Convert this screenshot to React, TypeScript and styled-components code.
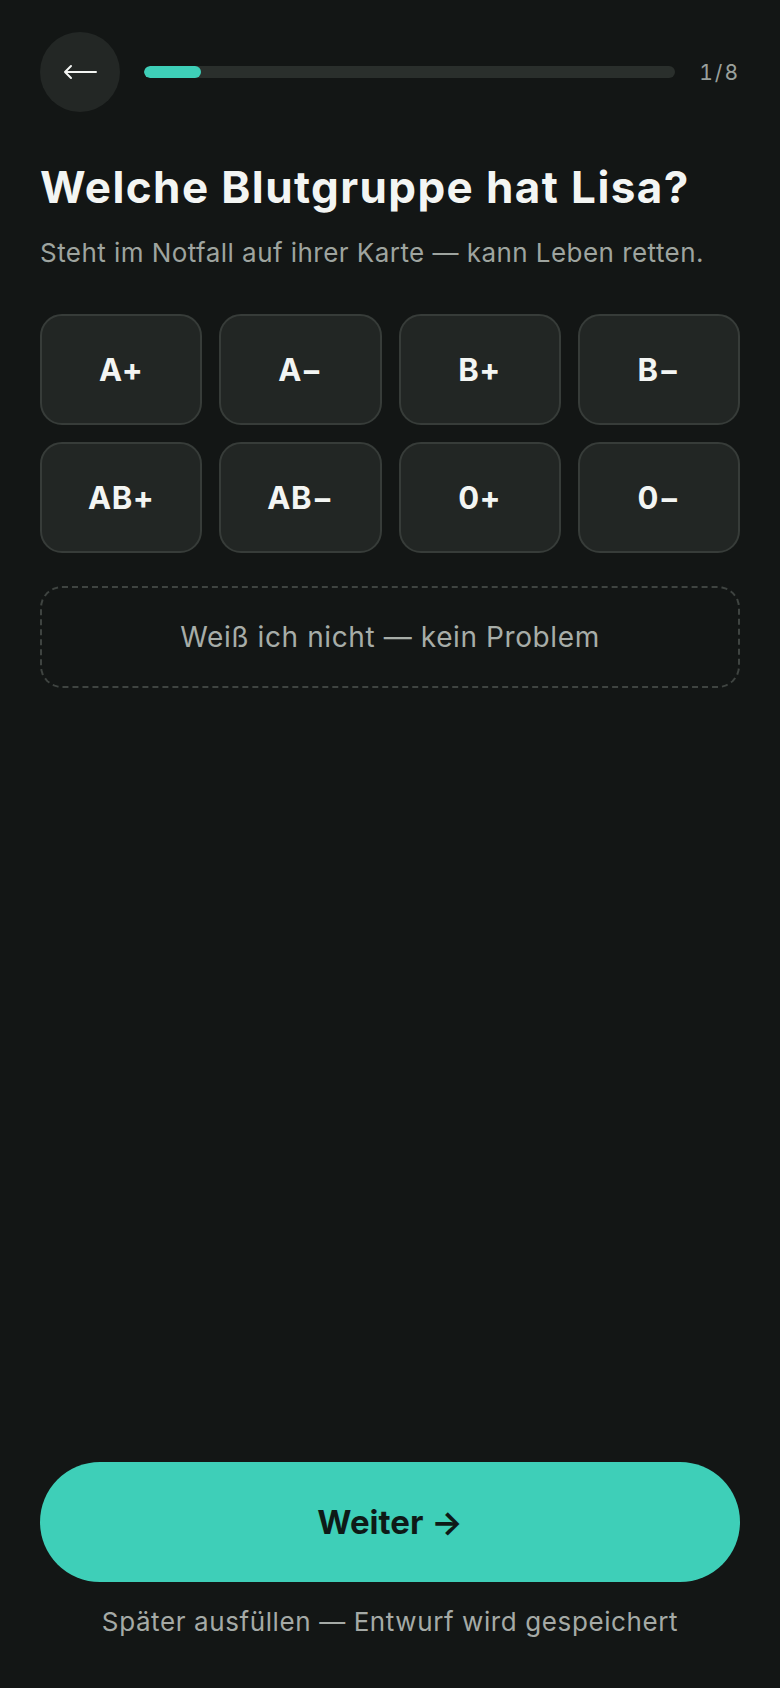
import React, { useState } from "react";
import styled, { createGlobalStyle } from "styled-components";

const GlobalStyle = createGlobalStyle`
  html, body {
    margin: 0;
    padding: 0;
    background: #131615;
  }
  * {
    box-sizing: border-box;
  }
`;

const Screen = styled.div`
  min-height: 100vh;
  display: flex;
  flex-direction: column;
  padding: 32px 40px 48px;
  background: #131615;
  color: #f3f5f3;
  font-family: Inter, "Noto Sans", sans-serif;
`;

const Header = styled.div`
  display: flex;
  align-items: center;
  gap: 24px;
  height: 80px;
`;

const BackButton = styled.button`
  width: 80px;
  height: 80px;
  flex: none;
  border: none;
  border-radius: 50%;
  background: #232725;
  color: #f3f5f3;
  display: flex;
  align-items: center;
  justify-content: center;
  padding: 0;
  cursor: pointer;
`;

const Track = styled.div`
  flex: 1;
  height: 12px;
  border-radius: 6px;
  background: #2a2f2c;
  overflow: hidden;
`;

const Fill = styled.div`
  height: 100%;
  border-radius: 6px;
  background: #3ecfb8;
`;

const StepCount = styled.span`
  font-size: 21px;
  letter-spacing: 2px;
  color: #9aa09c;
  font-variant-numeric: tabular-nums;
`;

const Title = styled.h1`
  margin: 49px 0 0;
  font-size: 44px;
  line-height: 1.2;
  font-weight: 700;
  letter-spacing: 1.4px;
  color: #f3f5f3;
`;

const Subtitle = styled.p`
  margin: 21px 0 0;
  font-size: 26px;
  line-height: 1.4;
  letter-spacing: 0.45px;
  color: #9ea49f;
`;

const Grid = styled.div`
  margin-top: 43px;
  display: grid;
  grid-template-columns: repeat(4, 1fr);
  gap: 17px;
`;

const Option = styled.button<{ $selected: boolean }>`
  height: 111px;
  border-radius: 22px;
  border: 2px solid ${({ $selected }) => ($selected ? "#3ecfb8" : "#373c39")};
  background: ${({ $selected }) => ($selected ? "#1c2e2a" : "#222624")};
  color: #f3f5f3;
  font-family: inherit;
  font-size: 31px;
  font-weight: 700;
  letter-spacing: 0.5px;
  cursor: pointer;
`;

const UnknownButton = styled.button`
  margin-top: 33px;
  height: 102px;
  border-radius: 22px;
  border: 2px dashed #3f4441;
  background: transparent;
  color: #a7ada8;
  font-family: inherit;
  font-size: 28px;
  letter-spacing: 0.6px;
  cursor: pointer;
`;

const Spacer = styled.div`
  flex: 1;
`;

const NextButton = styled.button`
  height: 120px;
  border: none;
  border-radius: 60px;
  background: #3ecfb8;
  color: #0e1a17;
  font-family: inherit;
  font-size: 33px;
  font-weight: 700;
  cursor: pointer;
`;

const Footnote = styled.p`
  margin: 22px 0 0;
  text-align: center;
  font-size: 26px;
  line-height: 1.4;
  letter-spacing: 0.6px;
  color: #a5aaa6;
`;

const groups = ["A+", "A−", "B+", "B−", "AB+", "AB−", "0+", "0−"];

const App: React.FC = () => {
  const [selected, setSelected] = useState<string | null>(null);
  const step = 1;
  const total = 8;

  return (
    <>
      <GlobalStyle />
      <Screen>
        <Header>
          <BackButton aria-label="Zurück">
            <svg width="34" height="18" viewBox="0 0 34 18" fill="none">
              <path
                d="M33 9H2M8 3L2 9l6 6"
                stroke="#f3f5f3"
                strokeWidth="2"
                strokeLinecap="round"
                strokeLinejoin="round"
              />
            </svg>
          </BackButton>
          <Track>
            <Fill style={{ width: `${(step / total) * 86}%` }} />
          </Track>
          <StepCount>
            {step}/{total}
          </StepCount>
        </Header>

        <Title>Welche Blutgruppe hat Lisa?</Title>
        <Subtitle>Steht im Notfall auf ihrer Karte — kann Leben retten.</Subtitle>

        <Grid>
          {groups.map((g) => (
            <Option key={g} $selected={selected === g} onClick={() => setSelected(g)}>
              {g}
            </Option>
          ))}
        </Grid>

        <UnknownButton onClick={() => setSelected(null)}>
          Weiß ich nicht — kein Problem
        </UnknownButton>

        <Spacer />

        <NextButton>Weiter →</NextButton>
        <Footnote>Später ausfüllen — Entwurf wird gespeichert</Footnote>
      </Screen>
    </>
  );
};

export default App;
